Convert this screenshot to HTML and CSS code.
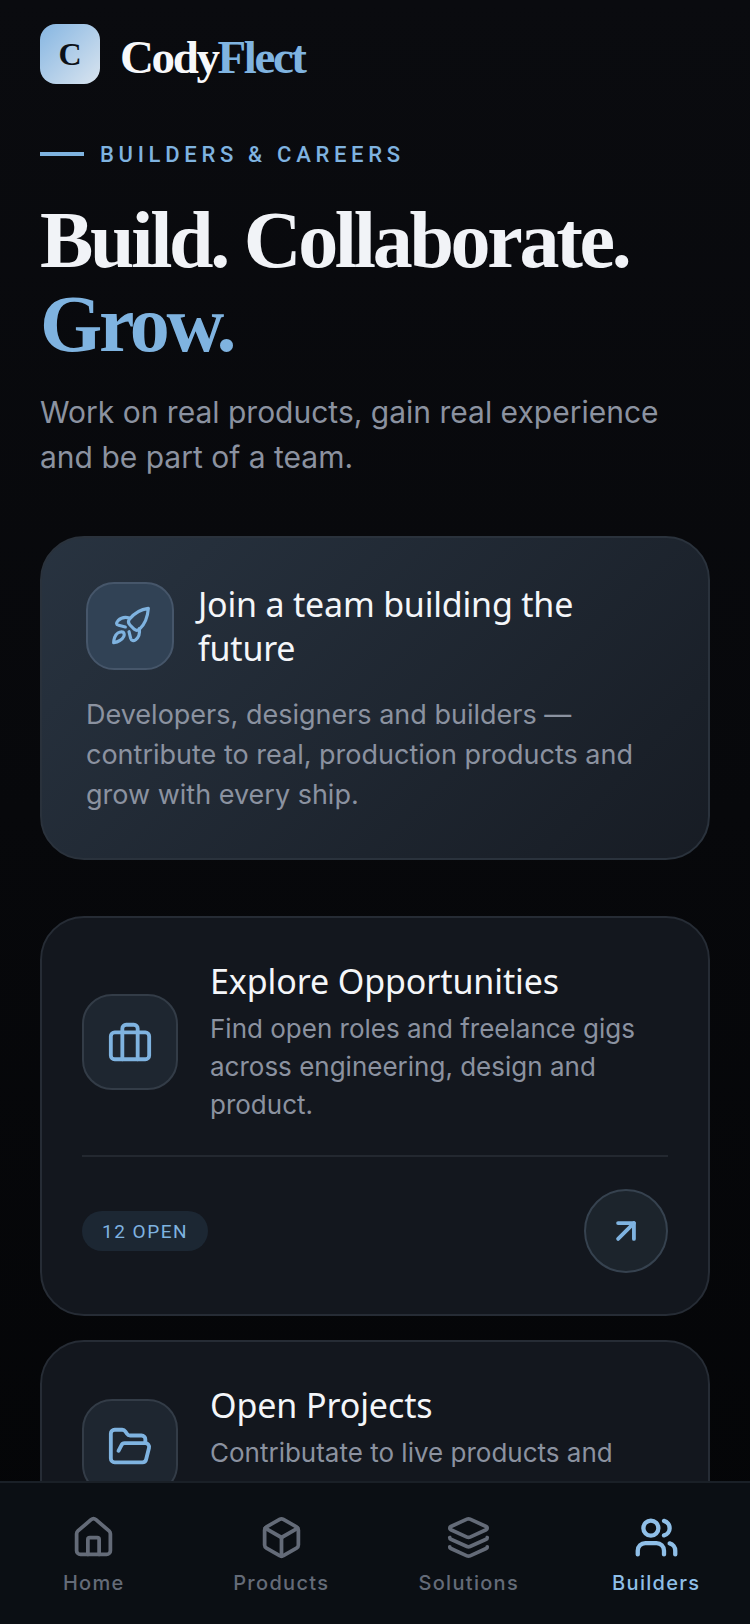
FILE: index.html
```html
<!DOCTYPE html>
<html lang="en">
<head>
<meta charset="utf-8">
<title>CodyFlect</title>
<link rel="stylesheet" href="styles.css">
</head>
<body>
<div class="app">
  <main class="main">
    <header class="brand">
      <div class="logo">C</div>
      <div class="wordmark">Cody<span class="accent">Flect</span></div>
    </header>
    <div class="eyebrow"><span class="rule"></span><span>BUILDERS &amp; CAREERS</span></div>
    <h1 class="headline">Build. Collaborate.<br><span class="accent">Grow.</span></h1>
    <p class="lede">Work on real products, gain real experience and be part of a team.</p>

    <section class="card hero">
      <div class="hero-top">
        <div class="icon-box hero-icon">
          <svg class="ic-rocket" viewBox="30 48 120 120" fill="none" stroke="currentColor" stroke-width="9.500" stroke-linecap="round" stroke-linejoin="round"><path d="M145 55C120 58 102 70 88 88C84 94 84 99 90 105L103 118C108 122 113 122 118 118C136 102 143 82 145 55Z"/><path d="M88 84C75 80 62 84 54 92C48 99 48 104 56 106L76 111"/><path d="M118 116C120 130 116 142 107 149C100 154 94 152 92 145L87 125"/><path d="M68 126C58 124 48 132 44 142C42 148 41 153 41 158C48 157 54 155 60 151C70 145 74 136 72 130C71 128 70 127 68 126Z"/></svg>
        </div>
        <h2 class="hero-title">Join a team building the future</h2>
      </div>
      <p class="hero-desc">Developers, designers and builders — contribute to real, production products and grow with every ship.</p>
    </section>

    <section class="card feature first">
      <div class="feature-top">
        <div class="icon-box">
          <svg class="ic" viewBox="0 0 24 24" fill="none" stroke="currentColor" stroke-width="2" stroke-linecap="round" stroke-linejoin="round"><rect x="2" y="7" width="20" height="14" rx="2"/><path d="M16 21V5a2 2 0 0 0-2-2h-4a2 2 0 0 0-2 2v16"/></svg>
        </div>
        <div class="feature-text">
          <h3 class="feature-title">Explore Opportunities</h3>
          <p class="feature-desc">Find open roles and freelance gigs across engineering, design and product.</p>
        </div>
      </div>
      <div class="feature-foot">
        <span class="pill">12 OPEN</span>
        <span class="go">
          <svg class="ic-arrow" viewBox="0 0 24 24" fill="none" stroke="currentColor" stroke-width="2.400" stroke-linecap="round" stroke-linejoin="round"><path d="M7 17L17 7"/><path d="M7 7h10v10"/></svg>
        </span>
      </div>
    </section>

    <section class="card feature">
      <div class="feature-top">
        <div class="icon-box">
          <svg class="ic" viewBox="0 0 24 24" fill="none" stroke="currentColor" stroke-width="2" stroke-linecap="round" stroke-linejoin="round"><path d="M6 14l1.500-2.900A2 2 0 0 1 9.200 10H20a2 2 0 0 1 1.900 2.500l-1.500 6a2 2 0 0 1-2 1.500H4a2 2 0 0 1-2-2V5a2 2 0 0 1 2-2h3.900a2 2 0 0 1 1.700.9l.8 1.200a2 2 0 0 0 1.700.9H18a2 2 0 0 1 2 2v2"/></svg>
        </div>
        <div class="feature-text two-line">
          <h3 class="feature-title">Open Projects</h3>
          <p class="feature-desc">Contributate to live products and</p>
        </div>
      </div>
    </section>
  </main>

  <nav class="nav">
    <a class="nav-item">
      <svg class="nav-ic" viewBox="0 0 24 24" fill="none" stroke="currentColor" stroke-width="2" stroke-linecap="round" stroke-linejoin="round"><path d="M15 21v-8a1 1 0 0 0-1-1h-4a1 1 0 0 0-1 1v8"/><path d="M3 10a2 2 0 0 1 .7-1.500l7-6a2 2 0 0 1 2.600 0l7 6a2 2 0 0 1 .7 1.500v9a2 2 0 0 1-2 2H5a2 2 0 0 1-2-2z"/></svg>
      <span>Home</span>
    </a>
    <a class="nav-item">
      <svg class="nav-ic" viewBox="0 0 24 24" fill="none" stroke="currentColor" stroke-width="2" stroke-linecap="round" stroke-linejoin="round"><path d="M11 21.700a2 2 0 0 0 2 0l7-4A2 2 0 0 0 21 16V8a2 2 0 0 0-1-1.700l-7-4a2 2 0 0 0-2 0l-7 4A2 2 0 0 0 3 8v8a2 2 0 0 0 1 1.700z"/><path d="M12 22V12"/><path d="M3.300 7L12 12l8.700-5"/></svg>
      <span>Products</span>
    </a>
    <a class="nav-item">
      <svg class="nav-ic" viewBox="0 0 24 24" fill="none" stroke="currentColor" stroke-width="2" stroke-linecap="round" stroke-linejoin="round"><path d="M12.800 2.200a2 2 0 0 0-1.600 0L2.600 6.100a1 1 0 0 0 0 1.800l8.600 3.900a2 2 0 0 0 1.600 0l8.600-3.900a1 1 0 0 0 0-1.800z"/><path d="M2 12a1 1 0 0 0 .6.900l8.600 3.900a2 2 0 0 0 1.600 0l8.600-3.900A1 1 0 0 0 22 12"/><path d="M2 17a1 1 0 0 0 .6.900l8.600 3.900a2 2 0 0 0 1.600 0l8.600-3.900A1 1 0 0 0 22 17"/></svg>
      <span>Solutions</span>
    </a>
    <a class="nav-item active">
      <svg class="nav-ic" viewBox="0 0 24 24" fill="none" stroke="currentColor" stroke-width="2.300" stroke-linecap="round" stroke-linejoin="round"><path d="M16 21v-2a4 4 0 0 0-4-4H6a4 4 0 0 0-4 4v2"/><circle cx="9" cy="7" r="4"/><path d="M22 21v-2a4 4 0 0 0-3-3.870"/><path d="M16 3.130a4 4 0 0 1 0 7.750"/></svg>
      <span>Builders</span>
    </a>
  </nav>
</div>
</body>
</html>
```

FILE: styles.css
```css
* { box-sizing: border-box; }
html, body { margin: 0; height: 100%; }
body {
  background: #050608;
  color: #f1f3f7;
  font-family: "Inter", "Liberation Sans", sans-serif;
  overflow: hidden;
}
.app {
  height: 100vh;
  display: flex;
  flex-direction: column;
  background: linear-gradient(180deg, #0a0b0f 0%, #040507 100%);
}
.main {
  flex: 1;
  min-height: 0;
  overflow: hidden;
  padding: 24px 40px 0;
}
.accent { color: #7fb3e0; }

.brand { display: flex; align-items: center; gap: 20px; height: 60px; }
.logo {
  width: 60px;
  height: 60px;
  border-radius: 16px;
  background: linear-gradient(135deg, #86b6e2 0%, #d9e4ef 100%);
  color: #0c1118;
  display: flex;
  align-items: center;
  justify-content: center;
  font-family: "Liberation Serif", serif;
  font-weight: 700;
  font-size: 32px;
}
.wordmark {
  padding-top: 6px;
  font-family: "Liberation Serif", serif;
  font-weight: 700;
  font-size: 47px;
  letter-spacing: -2.400px;
  color: #f7f8fa;
}

.eyebrow {
  display: flex;
  align-items: center;
  gap: 16px;
  margin-top: 57px;
  height: 26px;
  font-family: "Roboto", sans-serif;
  font-size: 22px;
  font-weight: 500;
  letter-spacing: 4.700px;
  color: #7fb3e0;
}
.rule { width: 44px; height: 4px; background: #7fb3e0; }

.headline {
  margin: 31px 0 0;
  font-family: "Liberation Serif", serif;
  font-weight: 700;
  font-size: 80px;
  line-height: 84px;
  letter-spacing: -3.300px;
  color: #f1f3f7;
}
.lede {
  margin: 24px 0 0;
  font-size: 30px;
  line-height: 45px;
  color: #8b92a0;
}

.card {
  border-radius: 44px;
  border: 2px solid #262c35;
  background: #13171e;
}
.hero {
  margin-top: 56px;
  height: 324px;
  padding: 44px;
  border-color: #2a323c;
  background: linear-gradient(135deg, #283340 0%, #171c24 100%);
}
.hero-top { display: flex; align-items: center; gap: 24px; }
.hero-title {
  margin: 0;
  font-family: "Noto Sans", sans-serif;
  font-weight: 400;
  font-size: 34px;
  line-height: 44px;
  letter-spacing: -0.200px;
  color: #f4f6f9;
}
.hero-desc {
  margin: 25px 0 0;
  font-size: 27px;
  line-height: 40px;
  color: #8b92a0;
}

.icon-box {
  flex: none;
  width: 96px;
  height: 96px;
  border-radius: 30px;
  border: 2px solid #333c47;
  background: #1e2630;
  color: #7fb3e0;
  display: flex;
  align-items: center;
  justify-content: center;
}
.hero-icon {
  width: 88px;
  height: 88px;
  border-radius: 28px;
  border-color: #46566a;
  background: #314255;
}
.ic { width: 46px; height: 46px; }
.ic-rocket { width: 40px; height: 40px; }

.feature { padding: 40px 40px 0; }
.first { margin-top: 56px; height: 400px; }
.feature:not(.first) { margin-top: 24px; height: 300px; }
.feature-top { display: flex; align-items: center; gap: 32px; }
.two-line { min-height: 130px; }
.feature-title {
  margin: 0;
  font-family: "Noto Sans", sans-serif;
  font-weight: 400;
  font-size: 34px;
  line-height: 46px;
  letter-spacing: -0.100px;
  color: #f4f6f9;
}
.feature-desc {
  margin: 6px 0 2px;
  font-size: 26px;
  line-height: 38px;
  color: #8b92a0;
}
.feature-foot {
  margin-top: 29px;
  padding-top: 32px;
  border-top: 2px solid #232830;
  display: flex;
  align-items: center;
  justify-content: space-between;
}
.pill {
  height: 40px;
  padding: 0 20px;
  border-radius: 20px;
  background: #1c2733;
  color: #7fb3e0;
  display: flex;
  align-items: center;
  font-family: "Roboto", sans-serif;
  font-size: 19px;
  font-weight: 400;
  letter-spacing: 1.500px;
}
.go {
  width: 84px;
  height: 84px;
  border-radius: 50%;
  border: 2px solid #36424f;
  background: #1c242c;
  color: #7fb3e0;
  display: flex;
  align-items: center;
  justify-content: center;
}
.ic-arrow { width: 38px; height: 38px; }

.nav {
  flex: none;
  height: 143px;
  display: grid;
  grid-template-columns: repeat(4, 187.500px);
  border-top: 2px solid #1a2027;
  background: #0b0f14;
  padding-top: 32px;
}
.nav-item {
  display: flex;
  flex-direction: column;
  align-items: center;
  gap: 9px;
  color: #646b78;
  font-size: 20px;
  font-weight: 500;
  letter-spacing: 1.300px;
  line-height: 28px;
}
.nav-ic { width: 45px; height: 45px; }
.active { color: #8fbfe8; }
```
